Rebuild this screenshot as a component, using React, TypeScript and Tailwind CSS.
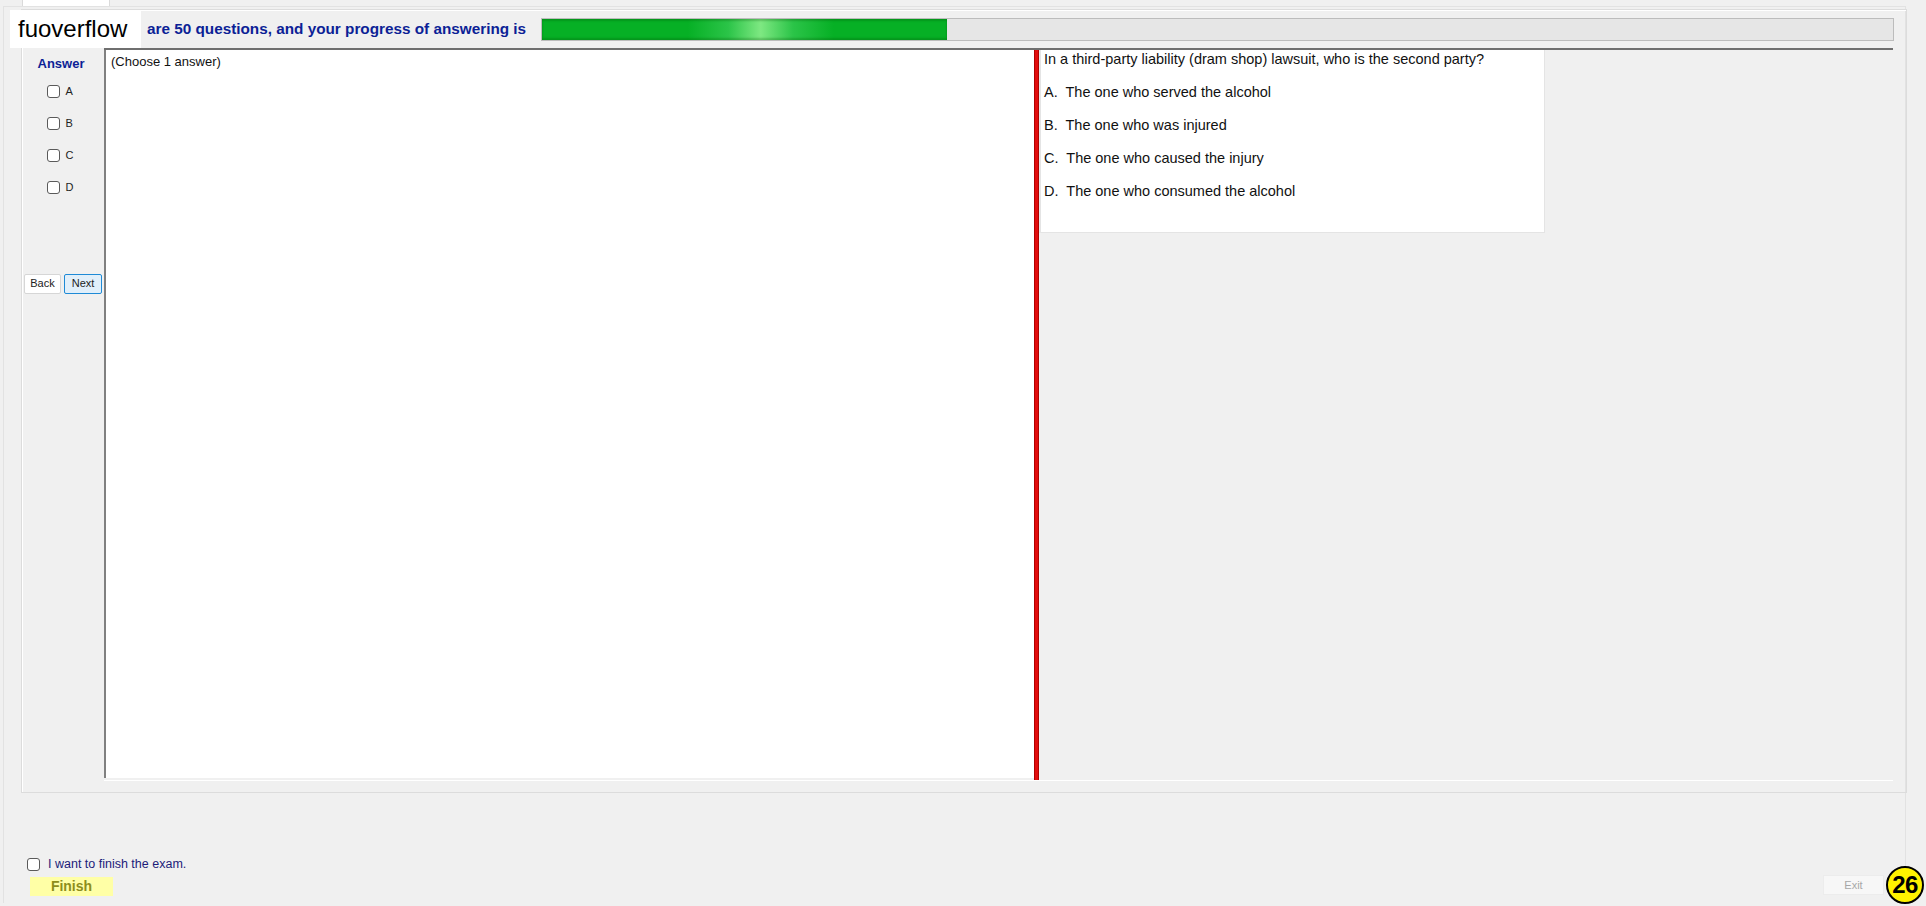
import React from 'react';

const options = [
  'A.  The one who served the alcohol',
  'B.  The one who was injured',
  'C.  The one who caused the injury',
  'D.  The one who consumed the alcohol',
];

const Box: React.FC<{ className?: string }> = ({ className = '' }) => (
  <span className={`inline-block w-[13px] h-[13px] rounded-[3px] border border-[#5a5a5a] bg-white ${className}`}></span>
);

export default function App() {
  return (
    <div className="relative w-[1926px] h-[906px] overflow-hidden bg-[#f0f0f0] font-['Liberation_Sans',Arial,sans-serif] text-[#111]">
      {/* tab strip */}
      <div className="flex h-[6px]">
        <div className="ml-[22px] w-[88px] h-[6px] bg-white border-x border-[#dadada]"></div>
      </div>

      {/* outer frame */}
      <div className="ml-[3px] w-[1903px] h-[897px] border-l border-r border-t border-[#e2e2e2] flex flex-col">
        {/* group box */}
        <div className="ml-[17px] mt-[2px] w-[1886px] h-[784px] border border-[#dcdcdc] shadow-[inset_1px_1px_0_#ffffff] flex flex-col">
          {/* header */}
          <div className="flex items-center h-[38px] pl-[125px] pr-[12px]">
            <span className="text-[15.3px] font-bold text-[#0c1f96]">are 50 questions, and your progress of answering is</span>
            <div className="ml-auto w-[1353px] h-[23px] bg-[#e6e6e6] border border-[#bcbcbc] flex">
              <div className="w-[405px] h-full bg-[linear-gradient(90deg,#06b025_0%,#06b025_36%,#2bc448_46%,#7ee882_54%,#2bc448_62%,#06b025_72%,#06b025_100%)] shadow-[inset_0_2px_2px_rgba(0,80,0,0.25),inset_0_-2px_2px_rgba(0,80,0,0.25)]"></div>
            </div>
          </div>

          {/* body */}
          <div className="flex h-[733px] pr-[13px]">
            {/* left column */}
            <div className="w-[82px] flex flex-col items-center">
              <div className="mt-[6px] text-[13px] font-bold text-[#0c1f96] ml-[-4px]">Answer</div>
              <div className="flex flex-col mt-[11px] gap-[19px] ml-[-6px]">
                {['A', 'B', 'C', 'D'].map((l) => (
                  <label key={l} className="flex items-center gap-[6px] text-[11px] h-[13px] text-[#222]">
                    <Box />
                    {l}
                  </label>
                ))}
              </div>
              <div className="flex gap-[3px] mt-[80px] self-start ml-[2px]">
                <button className="w-[37px] h-[20px] bg-white border border-[#d6d6d6] rounded-[2px] text-[11px] text-[#222]">Back</button>
                <button className="w-[38px] h-[20px] bg-[#e1effa] border border-[#1e8ad6] rounded-[2px] text-[11px] text-[#222]">Next</button>
              </div>
            </div>

            {/* main panel */}
            <div className="flex-1 flex flex-col border-t-2 border-[#6f6f6f]">
              <div className="flex h-[730px]">
                <div className="w-[930px] h-[728px] bg-white border-l-2 border-[#808080] px-[5px] pt-[2px] text-[13px] text-[#111]">
                  (Choose 1 answer)
                </div>
                <div className="w-[5px] h-[730px] bg-[#e10d0d] border-x border-[#b20000]"></div>
                <div className="flex-1 flex flex-col">
                  <div className="w-[506px] h-[183px] bg-white border-l-2 border-[#9a9a9a] border-b border-r border-[#e4e4e4] pl-[3px] text-[14.5px] text-[#111] leading-[33px]">
                    <div className="leading-[18px]">In a third-party liability (dram shop) lawsuit, who is the second party?</div>
                    <div className="mt-[8px]">
                      {options.map((o) => (
                        <div key={o} className="whitespace-pre">{o}</div>
                      ))}
                    </div>
                  </div>
                </div>
              </div>
              <div className="h-[1px] bg-white"></div>
            </div>
          </div>
        </div>

        {/* bottom area */}
        <div className="flex items-end mt-auto mb-[7px]">
          <div className="flex flex-col ml-[23px]">
            <label className="flex items-center gap-[8px] text-[12.5px] text-[#1c1c7a] h-[14px]">
              <Box className="w-[12px] h-[12px]" />
              I want to finish the exam.
            </label>
            <div className="mt-[6px] ml-[3px] w-[83px] h-[19px] bg-[#ffffa6] flex items-center justify-center text-[14px] font-bold text-[#8d8d1c]">
              Finish
            </div>
          </div>
          <div className="ml-auto mr-[21px] mb-[1px] w-[61px] h-[20px] bg-[#f7f7f7] border border-[#ececec] flex items-center justify-center text-[11px] text-[#a7a7a7]">
            Exit
          </div>
        </div>
      </div>

      {/* watermark label */}
      <div className="absolute left-[10px] top-[10px] w-[131px] h-[38px] bg-white flex items-center pl-[8px] text-[24px] text-black">
        fuoverflow
      </div>

      {/* page badge */}
      <div className="absolute left-[1886px] top-[866px] w-[38px] h-[38px] rounded-full bg-[#fff200] border-2 border-black flex items-center justify-center text-[24px] font-bold text-black tracking-[-0.5px]">
        26
      </div>
    </div>
  );
}
